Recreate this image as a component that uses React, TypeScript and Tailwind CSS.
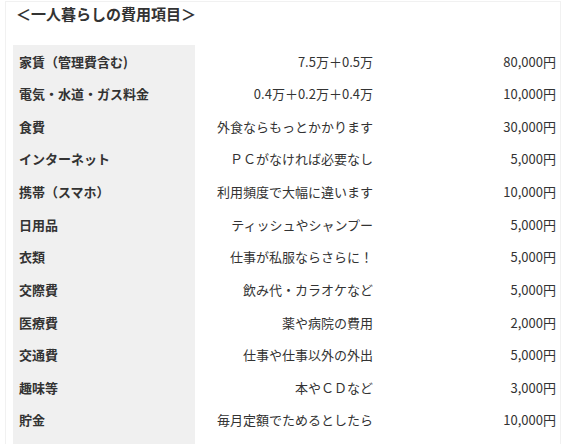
import React from "react";

const rows: [string, string, string][] = [
  ["家賃（管理費含む)", "7.5万＋0.5万", "80,000円"],
  ["電気・水道・ガス料金", "0.4万＋0.2万＋0.4万", "10,000円"],
  ["食費", "外食ならもっとかかります", "30,000円"],
  ["インターネット", "ＰＣがなければ必要なし", "5,000円"],
  ["携帯（スマホ）", "利用頻度で大幅に違います", "10,000円"],
  ["日用品", "ティッシュやシャンプー", "5,000円"],
  ["衣類", "仕事が私服ならさらに！", "5,000円"],
  ["交際費", "飲み代・カラオケなど", "5,000円"],
  ["医療費", "薬や病院の費用", "2,000円"],
  ["交通費", "仕事や仕事以外の外出", "5,000円"],
  ["趣味等", "本やＣＤなど", "3,000円"],
  ["貯金", "毎月定額でためるとしたら", "10,000円"],
  ["", "", ""],
];

export default function App() {
  return (
    <div
      className="w-[568px] h-[444px] overflow-hidden bg-white text-[#333]"
      style={{ fontFamily: '"Noto Sans CJK JP", "Noto Sans", sans-serif' }}
    >
      <div className="ml-[5px] mt-[1px] w-[556px] border border-[#f1f1f1] pl-[7px] pr-0">
        <div className="pl-[3px] pt-[1px] h-[43px] text-[15px] font-bold leading-[22px]">
          ＜一人暮らしの費用項目＞
        </div>
        <table className="border-collapse w-[547px] table-fixed text-[13px]">
          <colgroup>
            <col className="w-[182px]" />
            <col className="w-[183px]" />
            <col className="w-[182px]" />
          </colgroup>
          <tbody>
            {rows.map((r, i) => (
              <tr key={i} className="h-[32.64px]">
                <td className="bg-[#f0f0f0] pl-[6px] font-bold align-middle whitespace-nowrap">
                  {r[0]}
                </td>
                <td className="text-right pr-[5px] align-middle whitespace-nowrap">
                  {r[1]}
                </td>
                <td className="text-right pr-[4px] align-middle whitespace-nowrap">
                  {r[2]}
                </td>
              </tr>
            ))}
          </tbody>
        </table>
      </div>
    </div>
  );
}
